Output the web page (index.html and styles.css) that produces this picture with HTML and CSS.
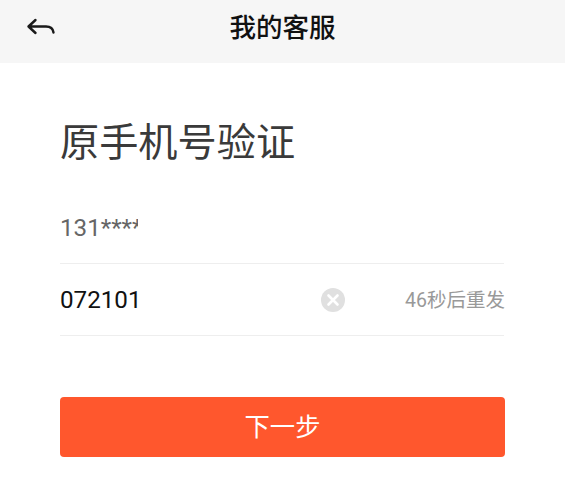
FILE: index.html
```html
<!DOCTYPE html>
<html>
<head>
    <meta charset="utf-8" />
    <title>我的客服</title>
    <link rel="stylesheet" href="styles.css">
</head>
<body>
    <!-- top bar -->
    <div class="topbar">
        <svg class="back" width="30" height="22" viewBox="0 0 30 22">
            <path d="M9.5 3 L2.5 9.5 L9.5 16 M2.5 9.5 H20 C24.5 9.5 27 11.5 27.5 15.5" fill="none" stroke="#1a1a1a" stroke-width="2.4" stroke-linecap="round" stroke-linejoin="round"/>
        </svg>
        <span class="title">我的客服</span>
    </div>

    <div class="content">
        <h1 class="heading">原手机号验证</h1>
        <div class="row phone-row">
            <span class="phone">131****</span>
        </div>
        <div class="row code-row">
            <span class="code">072101</span>
            <svg class="clear" width="24" height="24" viewBox="0 0 24 24">
                <circle cx="12" cy="12" r="12" fill="#e0e0e0"/>
                <path d="M7.5 7.5 L16.5 16.5 M16.5 7.5 L7.5 16.5" stroke="#fff" stroke-width="2.6" stroke-linecap="round"/>
            </svg>
            <span class="timer">46秒后重发</span>
        </div>
        <button class="next">下一步</button>
    </div>
</body>
</html>
```

FILE: styles.css
```css
body {
    margin: 0;
    background: #fff;
    font-family: Roboto, "Noto Sans CJK SC", sans-serif;
}

/* top bar */
.topbar {
    position: relative;
    display: flex;
    justify-content: center;
    height: 63px;
    background: #f6f6f6;
}

.back {
    position: absolute;
    left: 26px;
    top: 17px;
}

.title {
    font-size: 26.5px;
    line-height: 56px;
    font-weight: 500;
    color: #111;
}

/* form */
.content {
    display: flex;
    flex-direction: column;
    padding: 0 60px;
}

.heading {
    margin: 52px 0 0;
    height: 56px;
    line-height: 56px;
    font-size: 39.2px;
    font-weight: 400;
    color: #3a3a3a;
}

.row {
    display: flex;
    align-items: center;
    box-sizing: border-box;
    width: 444px;
    height: 72px;
    border-bottom: 1px solid #eeeeee;
}

.phone-row {
    margin-top: 20px;
    height: 73px;
}

.phone {
    width: 78px;
    overflow: hidden;
    padding-top: 2px;
    font-size: 24.2px;
    color: #666;
}

.code {
    font-size: 24.2px;
    color: #111;
}

.clear {
    margin-left: auto;
}

.timer {
    margin: 0 -1px 0 60px;
    padding-bottom: 3px;
    font-size: 19.5px;
    color: #999;
}

.next {
    margin-top: 61px;
    height: 60px;
    padding: 0 0 5px;
    border: 0;
    border-radius: 4px;
    background: #ff572d;
    color: #fff;
    font-family: inherit;
    font-size: 25.3px;
}
```
